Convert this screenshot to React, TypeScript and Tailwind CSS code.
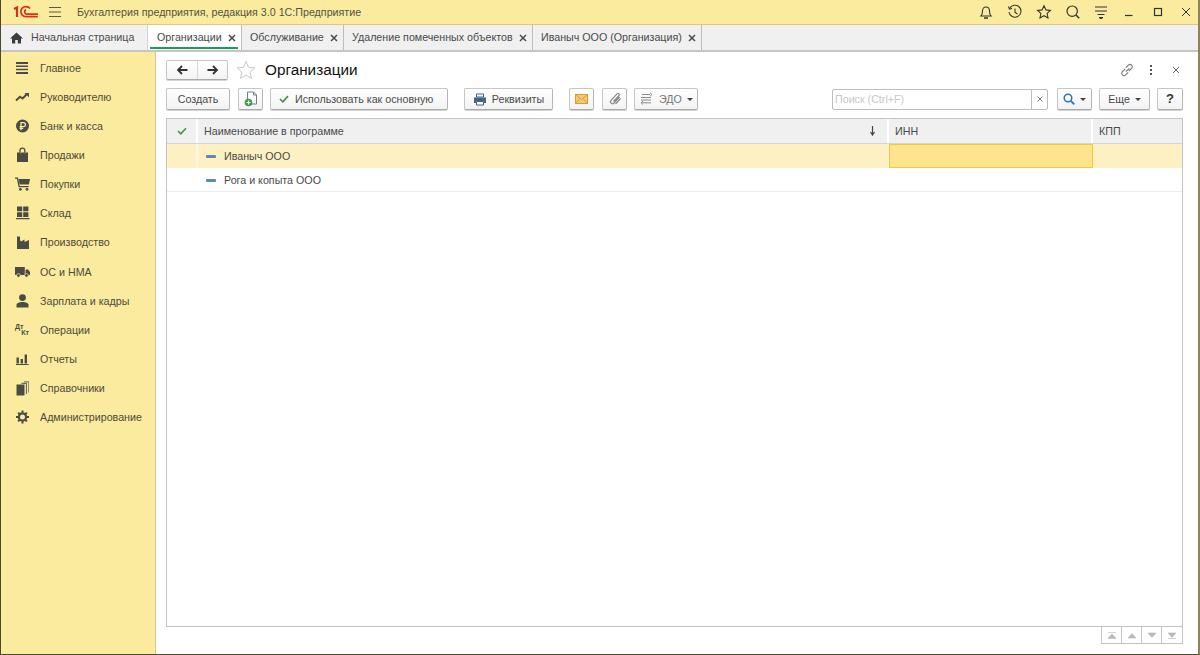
import React from "react";

const ink = "#4b4b45";

const menuIcons: Record<string, React.ReactNode> = {
  main: <path d="M1 2h12v2H1zM1 5.500h12v1.600H1zM1 8.700h12v1.600H1zM1 12h12v2H1z" fill={ink} />,
  chart: <g><path d="M1 11.500l4-3.800 2.600 1.800L11.500 5.500" fill="none" stroke={ink} strokeWidth="2" /><path d="M9.500 4H14v4.200z" fill={ink} /></g>,
  bank: <g><circle cx="7.500" cy="8" r="6.500" fill={ink} /><path d="M6 12.200V4.600h2.400a2 2 0 010 4.100H4.600M4.600 10.400h3.600" fill="none" stroke="#fbeb9e" strokeWidth="1.300" /></g>,
  bag: <g><path d="M2 5.500h2.500l1 1 1-1h2.500l1 1 1-1h2V15H2z" fill={ink} /><path d="M5 6V3.500a2.400 2.400 0 014.800 0V6" fill="none" stroke={ink} strokeWidth="1.300" /></g>,
  cart: <g><path d="M0 1.500h3l1.700 8.500h9v1.300H3.600L1.900 2.800H0z" fill={ink} /><path d="M3.600 3H15l-1 5.500H4.600z" fill={ink} /><circle cx="5.400" cy="13.300" r="1.400" fill={ink} /><circle cx="12" cy="13.300" r="1.400" fill={ink} /></g>,
  store: <path d="M2 1.500h5.200v4.800H2zM8.200 1.500h5.200v4.800H8.200zM2 7.300h5.200V12H2zM8.200 7.300h5.200V12H8.200zM1 13h13.500v1.300H1z" fill={ink} />,
  factory: <path d="M2 1.500h3V5l1 1.500 3.500-2v2.600l4.500-2V14H2z" fill={ink} />,
  truck: <g><path d="M0 3h9.800v8H0zM10.600 5.500h2.500L15 8v3h-4.400z" fill={ink} /><circle cx="3.500" cy="11.400" r="1.800" fill={ink} stroke="#fbeb9e" strokeWidth=".7" /><circle cx="11.500" cy="11.400" r="1.800" fill={ink} stroke="#fbeb9e" strokeWidth=".7" /></g>,
  user: <g><circle cx="7.500" cy="4.600" r="3.400" fill={ink} /><path d="M1.500 14.500v-2.700c0-1.600 2.600-2.800 6-2.800s6 1.200 6 2.800v2.700z" fill={ink} /></g>,
  bars: <path d="M1.500 6.500h2.400V12.500H1.500zM5.600 8h2.400v4.500H5.600zM9.600 3.500H12v9H9.600zM1 13h12.600v1H1z" fill={ink} />,
  books: <g><path d="M9 1h5v11.500h-1V2.400H9z" fill="#8f8f80" /><path d="M6.500 2.800H12v11.300h-1.100V4H6.500z" fill="#6b6b60" /><path d="M1.500 4.500h8V15.500h-8z" fill={ink} /></g>,
  gear: <g><circle cx="7.500" cy="8" r="3.600" fill="none" stroke={ink} strokeWidth="2.200" /><path d="M6.500 1.500h2v2.200h-2zM6.500 12.300h2v2.200h-2zM1 7h2.200v2H1zM11.800 7H14v2h-2.200zM2.400 4.300L3.800 2.900l1.600 1.600L4 5.900zM9.600 11.500l1.400-1.400 1.600 1.600-1.400 1.400zM2.400 11.700L4 10.100l1.400 1.400-1.600 1.600zM9.600 4.500l1.600-1.600 1.400 1.400L11 5.900z" fill={ink} /></g>,
};

const menu: [string, React.ReactNode][] = [
  ["Главное", menuIcons.main],
  ["Руководителю", menuIcons.chart],
  ["Банк и касса", menuIcons.bank],
  ["Продажи", menuIcons.bag],
  ["Покупки", menuIcons.cart],
  ["Склад", menuIcons.store],
  ["Производство", menuIcons.factory],
  ["ОС и НМА", menuIcons.truck],
  ["Зарплата и кадры", menuIcons.user],
  ["Операции", null],
  ["Отчеты", menuIcons.bars],
  ["Справочники", menuIcons.books],
  ["Администрирование", menuIcons.gear],
];

function Close() {
  return (
    <svg width="8" height="8" viewBox="0 0 8 8" className="shrink-0">
      <path d="M1 1l6 6M7 1L1 7" stroke="#4a4a4a" strokeWidth="1.500" />
    </svg>
  );
}

function Tab({ label, w, active }: { label: string; w: string; active?: boolean }) {
  return (
    <div className={`relative flex h-full items-center justify-between border-r border-[#bdbdbd] pr-[5px] ${w} ${active ? "bg-white pl-[9px]" : "pl-[8px]"}`}>
      <span className="whitespace-nowrap">{label}</span>
      <Close />
      {active && <div className="absolute bottom-[1px] left-[2px] right-[3px] h-[2px] bg-[#1f9d55]" />}
    </div>
  );
}

function Btn({ children, className = "" }: { children: React.ReactNode; className?: string }) {
  return (
    <div className={`flex h-[22px] shrink-0 items-center justify-center whitespace-nowrap rounded-[2px] border border-[#c6c6c6] border-b-[#a9a9a9] border-r-[#b5b5b5] bg-gradient-to-b from-white to-[#f3f3f3] shadow-[0_1px_0_#d5d5d5] ${className}`}>
      {children}
    </div>
  );
}

function Caret() {
  return <span className="inline-block h-0 w-0 border-x-[3px] border-t-[3px] border-x-transparent border-t-[#444]" />;
}

export default function App() {
  return (
    <div className="flex h-[655px] w-[1200px] flex-col overflow-hidden border-b border-l border-r-2 border-[#4d4a2c] border-r-[#8a8458] bg-[#fbeb9e] font-['Liberation_Sans',Arial,sans-serif] text-[10.700px] text-[#4a4a4a]">
      {/* title bar */}
      <div className="flex h-[25px] shrink-0 items-center border-b border-[#d9c987] bg-[#fbeb9e]">
        <svg width="26" height="14" viewBox="0 0 26 14" className="ml-[12px] shrink-0">
          <path d="M1 4l3-1.500V12" fill="none" stroke="#d6301f" strokeWidth="2.200" />
          <path d="M17 3.600c-1-1.400-2.600-2-4.200-2a5 5 0 000 10h12M13 4.500a2.600 2.600 0 000 4.600h12" fill="none" stroke="#d6301f" strokeWidth="1.700" />
        </svg>
        <svg width="14" height="12" viewBox="0 0 14 12" className="ml-[9px] shrink-0">
          <path d="M1 1.500h12M1 6h12M1 10.500h12" stroke="#5c5a4a" strokeWidth="1.200" />
        </svg>
        <span className="ml-[15px] text-[#55523f]">Бухгалтерия предприятия, редакция 3.0 1С:Предприятие</span>
        <div className="ml-auto flex items-center text-[#333]">
          <svg width="16" height="16" viewBox="0 0 16 16" fill="none" stroke="#333" strokeWidth="1.100">
            <path d="M3 12c1.300-1.200 1.500-2.500 1.500-5 0-2.300 1.400-4 3.500-4s3.500 1.700 3.500 4c0 2.500.2 3.800 1.500 5z" /><path d="M6 14h4" strokeWidth="1.500" />
          </svg>
          <svg width="16" height="16" viewBox="0 0 16 16" fill="none" stroke="#333" strokeWidth="1.100" className="ml-[13px]">
            <path d="M2.600 4.500A6 6 0 112 8" /><path d="M1.500 2.500l1 2.500 2.500-.5M8 4.500V8.500l2.500 1.500" />
          </svg>
          <svg width="16" height="16" viewBox="0 0 16 16" fill="none" stroke="#333" strokeWidth="1.100" className="ml-[13px]">
            <path d="M8 1.800l1.900 4.100 4.500.5-3.300 3 .9 4.500L8 11.700l-4 2.200.9-4.500-3.300-3 4.500-.5z" />
          </svg>
          <svg width="16" height="16" viewBox="0 0 16 16" fill="none" stroke="#333" strokeWidth="1.200" className="ml-[13px]">
            <circle cx="7.200" cy="7.200" r="5.200" /><path d="M11 11l3.200 3.200" strokeWidth="1.500" />
          </svg>
          <svg width="14" height="14" viewBox="0 0 14 14" className="ml-[13px]">
            <path d="M1 2h12M1 6h12" stroke="#333" strokeWidth="1.100" /><path d="M3.500 9.500h7M5 12.500h4l-2 1.500z" stroke="#333" strokeWidth="1" fill="#333" />
          </svg>
          <svg width="10" height="10" viewBox="0 0 10 10" className="ml-[16px]">
            <path d="M1 8.500h7.500" stroke="#333" strokeWidth="1.200" />
          </svg>
          <svg width="10" height="10" viewBox="0 0 10 10" className="ml-[19px]">
            <rect x="1.500" y="1.500" width="7" height="7" fill="none" stroke="#333" strokeWidth="1.200" />
          </svg>
          <svg width="10" height="10" viewBox="0 0 10 10" className="ml-[18px] mr-[7px]">
            <path d="M1 1l8 8M9 1L1 9" stroke="#333" strokeWidth="1" />
          </svg>
        </div>
      </div>

      {/* tabs */}
      <div className="flex h-[27px] shrink-0 items-stretch border-b-2 border-[#c5c5c5] bg-[#f0f0f0]">
        <div className="flex w-[147px] shrink-0 items-center border-r border-[#d2d2d2]">
          <svg width="13" height="12" viewBox="0 0 13 12" className="ml-[9px] shrink-0">
            <path d="M6.500 .5L13 6.500h-2V11.500H7.800V8H5.200v3.500H2V6.500H0z" fill="#3c3c3c" />
          </svg>
          <span className="ml-[8px] whitespace-nowrap">Начальная страница</span>
        </div>
        <Tab label="Организации" w="w-[94px]" active />
        <Tab label="Обслуживание" w="w-[102px]" />
        <Tab label="Удаление помеченных объектов" w="w-[189px]" />
        <Tab label="Иваныч ООО (Организация)" w="w-[169px]" />
      </div>

      <div className="flex min-h-0 flex-1">
        {/* sidebar */}
        <div className="flex w-[155px] shrink-0 flex-col border-r border-[#d9c987] pt-[1px]">
          {menu.map(([label, icon]) => (
            <div key={label} className="flex h-[29.170px] shrink-0 items-center pl-[14px]">
              <span className="flex w-[25px] items-center">
                {icon ? (
                  <svg width="15" height="16" viewBox="0 0 15 16">{icon}</svg>
                ) : (
                  <span className="flex w-[14px] flex-col text-[7px] font-bold leading-[6px] text-[#4b4b45]">
                    <span>Дт</span>
                    <span className="self-end">Кт</span>
                  </span>
                )}
              </span>
              <span className="whitespace-nowrap text-[#4d4a3c]">{label}</span>
            </div>
          ))}
        </div>

        {/* main */}
        <div className="flex min-w-0 flex-1 flex-col bg-white pl-[10px] pr-[15px]">
          <div className="flex h-[36px] shrink-0 items-center">
            <div className="flex h-[20px] w-[62px] rounded-[2px] border border-[#c6c6c6] border-b-[#a9a9a9] bg-gradient-to-b from-white to-[#f3f3f3] shadow-[0_1px_0_#d5d5d5]">
              <div className="flex w-[31px] items-center justify-center border-r border-[#d8d8d8]">
                <svg width="12" height="10" viewBox="0 0 12 10"><path d="M11.500 5H2.500M6 1L2 5l4 4" fill="none" stroke="#333" strokeWidth="1.800" /></svg>
              </div>
              <div className="flex flex-1 items-center justify-center">
                <svg width="12" height="10" viewBox="0 0 12 10"><path d="M.5 5h9M6 1l4 4-4 4" fill="none" stroke="#333" strokeWidth="1.800" /></svg>
              </div>
            </div>
            <svg width="20" height="20" viewBox="0 0 20 20" className="ml-[8px]" fill="none" stroke="#c9c9c9" strokeWidth="1">
              <path d="M10 1.500l2.500 5.800 6.300.6-4.800 4.200 1.500 6.200L10 15l-5.500 3.300L6 12.100 1.200 7.900l6.300-.6z" />
            </svg>
            <span className="ml-[9px] text-[15.300px] text-[#111]">Организации</span>
            <svg width="16" height="16" viewBox="0 0 14 14" className="ml-auto" fill="none" stroke="#777" strokeWidth="1">
              <path d="M6 8.500l3-3M5.500 6L2.800 8.700a2 2 0 002.800 2.800L8 9M8.500 8L11.200 5.300a2 2 0 00-2.800-2.800L6 5" />
            </svg>
            <span className="ml-[15px] flex flex-col gap-[2px]">
              <i className="h-[2px] w-[2px] bg-[#555]" /><i className="h-[2px] w-[2px] bg-[#555]" /><i className="h-[2px] w-[2px] bg-[#555]" />
            </span>
            <svg width="8" height="8" viewBox="0 0 8 8" className="ml-[20px] mr-[3px]"><path d="M1 1l6 6M7 1L1 7" stroke="#666" strokeWidth="1" /></svg>
          </div>

          <div className="flex h-[22px] shrink-0 items-center">
            <Btn className="w-[64px]">Создать</Btn>
            <Btn className="ml-[8px] w-[25px]">
              <svg width="14" height="16" viewBox="0 0 14 16">
                <path d="M3.500 1h6l3 3v9h-9z" fill="#fff" stroke="#6b7f8d" strokeWidth="1" /><path d="M9.500 1v3h3" fill="none" stroke="#6b7f8d" />
                <circle cx="4.500" cy="11.500" r="3.800" fill="#3c9a4a" /><path d="M2.500 11.500h4M4.500 9.500v4" stroke="#fff" strokeWidth="1.200" />
              </svg>
            </Btn>
            <Btn className="ml-[7px] w-[178px] justify-start">
              <svg width="10" height="8" viewBox="0 0 10 8" className="ml-[8px]"><path d="M1 4l2.800 2.800L9 1.200" fill="none" stroke="#3c9a3c" strokeWidth="1.700" /></svg>
              <span className="ml-[6px]">Использовать как основную</span>
            </Btn>
            <Btn className="ml-[16px] w-[89px]">
              <svg width="14" height="13" viewBox="0 0 14 13">
                <path d="M3.500 1h7v3h-7z" fill="#fff" stroke="#3f6488" /><path d="M1 4.500h12v5.500h-2V8H3v2H1z" fill="#3f6488" /><path d="M3.500 8.500h7v3.500h-7z" fill="#fff" stroke="#3f6488" />
              </svg>
              <span className="ml-[5px]">Реквизиты</span>
            </Btn>
            <Btn className="ml-[16px] w-[25px]">
              <svg width="13" height="10" viewBox="0 0 13 10">
                <rect x=".5" y=".5" width="12" height="9" fill="#f3c877" stroke="#dd9a32" /><path d="M1 1l5.500 4.500L12 1M1 9l4-4.500M12 9L8 4.500" fill="none" stroke="#dd9a32" strokeWidth=".9" />
              </svg>
            </Btn>
            <Btn className="ml-[8px] w-[25px]">
              <svg width="14" height="14" viewBox="0 0 14 14" fill="none" stroke="#8a8a8a" strokeWidth="1.200">
                <path d="M11.500 5L6 11a2 2 0 01-3-2.700l6-6.500a1.300 1.300 0 012 1.700L5.500 9.500" /><path d="M12.500 6.500l-5 5.500" />
              </svg>
            </Btn>
            <Btn className="ml-[7px] w-[64px]">
              <svg width="15" height="14" viewBox="0 0 15 14" fill="none" stroke="#8a8a8a" strokeWidth="1">
                <path d="M3 2.500h8M11 .8l2 1.700-2 1.700M2 5.500h10M2 8h10M12 10.800H3M4 9l-2 1.800 2 1.700" />
              </svg>
              <span className="ml-[5px] mr-[5px] text-[#777]">ЭДО</span>
              <Caret />
            </Btn>
            <div className="ml-auto flex h-[21px] w-[216px] items-stretch rounded-[2px] border border-[#bdbdbd]">
              <span className="flex flex-1 items-center border-r border-[#bdbdbd] pl-[2px] text-[#c8c8c8]">Поиск (Ctrl+F)</span>
              <span className="flex w-[15px] items-center justify-center">
                <svg width="6" height="6" viewBox="0 0 6 6"><path d="M.5.500l5 5M5.500.500l-5 5" stroke="#666" strokeWidth=".9" /></svg>
              </span>
            </div>
            <Btn className="ml-[9px] w-[35px] gap-[5px]">
              <svg width="12" height="12" viewBox="0 0 12 12" fill="none" stroke="#2f75ad" strokeWidth="1.500"><circle cx="5" cy="5" r="3.800" /><path d="M7.800 7.800L11.300 11.300" strokeWidth="1.800" /></svg>
              <Caret />
            </Btn>
            <Btn className="ml-[7px] w-[51px] gap-[5px]">
              <span>Еще</span>
              <Caret />
            </Btn>
            <Btn className="ml-[7px] w-[26px] text-[13px] font-bold text-[#333]">?</Btn>
          </div>

          {/* table */}
          <div className="mt-[8px] flex min-h-0 flex-1 flex-col border border-[#c4c4c4]">
            <div className="grid h-[25px] shrink-0 grid-cols-[31px_691px_204px_1fr] border-b border-[#d5d5d5] bg-[#f0f0f0]">
              <div className="flex items-center justify-center border-r-2 border-white">
                <svg width="10" height="8" viewBox="0 0 10 8"><path d="M1 4l2.800 2.800L9 1.200" fill="none" stroke="#3c9a3c" strokeWidth="1.600" /></svg>
              </div>
              <div className="flex items-center justify-between border-r-2 border-white pl-[6px] pr-[11px]">
                <span>Наименование в программе</span>
                <svg width="7" height="10" viewBox="0 0 7 10"><path d="M3.500 0v8M1.500 6l2 3 2-3" fill="none" stroke="#444" strokeWidth="1.200" /></svg>
              </div>
              <div className="flex items-center border-r-2 border-white pl-[6px]">ИНН</div>
              <div className="flex items-center pl-[6px]">КПП</div>
            </div>
            <div className="grid h-[24px] shrink-0 grid-cols-[31px_691px_204px_1fr] bg-[#fdf1c3]">
              <div className="border-r-2 border-[#fbf6de]" />
              <div className="flex items-center border-r border-[#fbf6de] pl-[8px]">
                <span className="h-[3px] w-[10px] rounded-[1px] bg-[#5f8bab]" />
                <span className="ml-[8px]">Иваныч ООО</span>
              </div>
              <div className="border border-[#f8c92a] bg-[#fee48e]" />
              <div />
            </div>
            <div className="flex h-[24px] shrink-0 items-center border-b border-[#ececec] pl-[39px] pt-[1px]">
              <span className="h-[3px] w-[10px] rounded-[1px] bg-[#5f8bab]" />
              <span className="ml-[8px]">Рога и копыта ООО</span>
            </div>
          </div>

          {/* paging */}
          <div className="flex h-[27px] shrink-0 justify-end">
            <div className="flex h-[17px] border-b border-l border-r border-[#c4c4c4]">
              {[
                "M1 .5h8M1 6.500L5 2l4 4.500z",
                "M1 6L5 1.500 9 6z",
                "M1 1l4 4.500L9 1z",
                "M1 1l4 4.500L9 1zM1 6.500h8",
              ].map((d, i) => (
                <div key={d} className={`flex w-[20px] items-center justify-center ${i < 3 ? "border-r border-[#c4c4c4]" : ""}`}>
                  <svg width="10" height="7" viewBox="0 0 10 7"><path d={d} fill="#b9b9b9" stroke="#b9b9b9" strokeWidth=".6" /></svg>
                </div>
              ))}
            </div>
          </div>
        </div>
      </div>
    </div>
  );
}
